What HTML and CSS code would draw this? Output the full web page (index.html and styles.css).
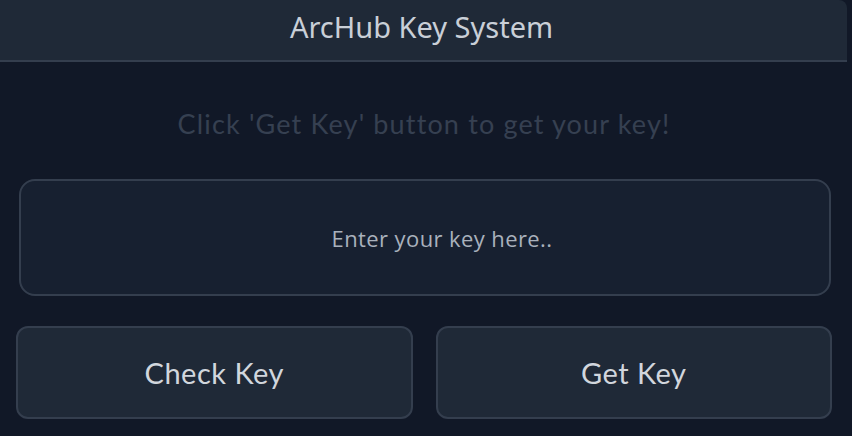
FILE: index.html
```html
<!DOCTYPE html>
<html>
<head>
<meta charset="utf-8">
<link rel="stylesheet" href="styles.css">
</head>
<body>
<div class="window">
  <header class="titlebar"><h1 class="title">ArcHub Key System</h1></header>
  <main class="content">
    <p class="hint">Click 'Get Key' button to get your key!</p>
    <input class="keyinput" type="text" placeholder="Enter your key here..">
    <div class="actions">
      <button class="btn">Check Key</button>
      <button class="btn">Get Key</button>
    </div>
  </main>
</div>
</body>
</html>
```

FILE: styles.css
```css
html, body {
  margin: 0;
  padding: 0;
  background: #111827;
  height: 100%;
  overflow: hidden;
}
.window {
  width: 847px;
  height: 436px;
  background: #111827;
  display: flex;
  flex-direction: column;
}
.titlebar {
  height: 60px;
  background: #1f2937;
  border-bottom: 2px solid #343e4e;
  border-top-right-radius: 8px;
  display: flex;
  align-items: center;
  justify-content: center;
}
.title {
  margin: 0;
  font-family: "Noto Sans", sans-serif;
  font-weight: 400;
  font-size: 29px;
  color: #c9cfd7;
  position: relative;
  top: -4px;
  left: -2px;
}
.content {
  display: flex;
  flex-direction: column;
  padding: 0 15px 0 16px;
}
.hint {
  margin: 47px 0 0;
  text-align: center;
  font-family: "Lato", sans-serif;
  font-size: 27px;
  letter-spacing: 1.15px;
  color: #364051;
  line-height: 30px;
}
.keyinput {
  margin: 40px 0 0 3px;
  width: 812px;
  height: 117px;
  box-sizing: border-box;
  background: #172030;
  border: 2px solid #343e4e;
  border-radius: 16px;
  text-align: center;
  font-family: "Open Sans", sans-serif;
  font-size: 22px;
  letter-spacing: 0.4px;
  color: #a9b1bc;
  outline: none;
  padding: 0 0 0 34px;
}
.keyinput::placeholder {
  color: #a9b1bc;
}
.actions {
  margin-top: 30px;
  display: flex;
  gap: 23px;
}
.btn {
  width: 397px;
  height: 93px;
  background: #1f2937;
  border: 2px solid #343e4e;
  border-radius: 12px;
  font-family: "Lato", sans-serif;
  font-size: 29px;
  letter-spacing: 0.5px;
  color: #d1d6dd;
  padding: 0;
}
```
